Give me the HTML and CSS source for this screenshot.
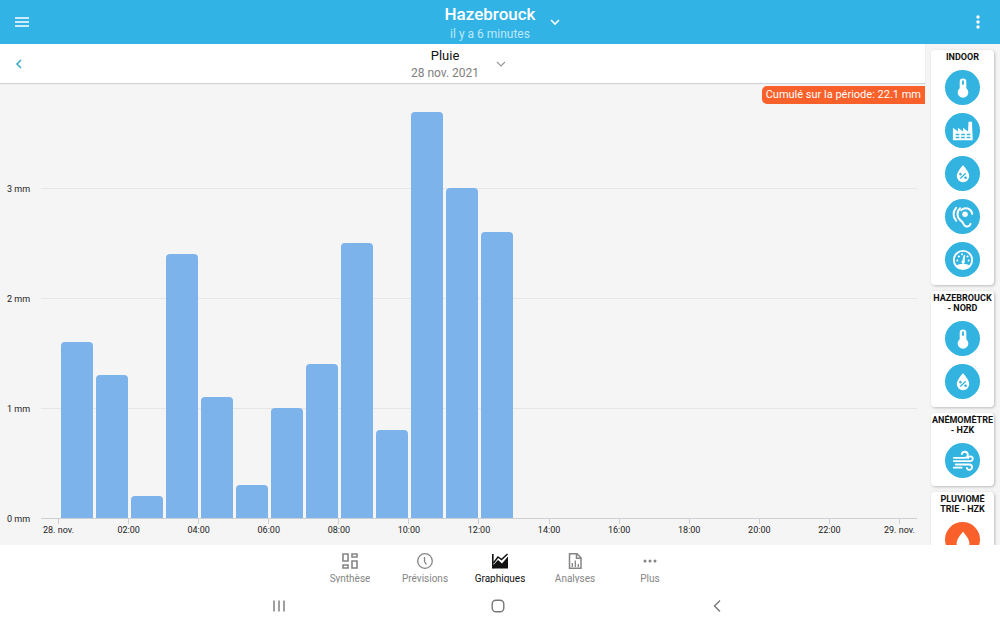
FILE: index.html
```html
<!DOCTYPE html>
<html lang="fr">
<head>
<meta charset="utf-8">
<meta name="viewport" content="width=device-width, initial-scale=1">
<title>Hazebrouck – Pluie</title>
<link rel="stylesheet" href="styles.css">
</head>
<body>
<svg class="defs" aria-hidden="true">
  <symbol id="thermo" viewBox="0 0 24 24">
    <path fill="currentColor" fill-rule="evenodd" d="M12 1.500a3.600 3.600 0 0 0-3.600 3.600v7.200a5.800 5.800 0 1 0 7.200 0V5.100A3.600 3.600 0 0 0 12 1.500zM12 3.600a1 1 0 0 1 1 1v3.800h-2V4.600a1 1 0 0 1 1-1z"/>
  </symbol>
  <symbol id="factory" viewBox="0 0 24 24">
    <path fill="currentColor" fill-rule="evenodd" d="M1 22V8.500l5.500 4V8.500l5.500 4V8.500l5.500 4L18 2h3.800l.8 20zM4 15v1.600h4V15zm6 0v1.600h4V15zm6 0v1.600h4V15zM4 18.200v1.600h4v-1.600zm6 0v1.600h4v-1.600zm6 0v1.600h4v-1.600z"/>
  </symbol>
  <symbol id="humidity" viewBox="0 0 24 24">
    <path fill="currentColor" d="M12 2.500s-6.800 7-6.800 11.700a6.800 6.800 0 0 0 13.600 0C18.800 9.500 12 2.500 12 2.500z"/>
    <g class="cut"><path d="M9 17l6-5.800" stroke-width="1.400"/><circle cx="9.200" cy="12.200" r="1"/><circle cx="14.800" cy="16" r="1"/></g>
  </symbol>
  <symbol id="ear" viewBox="0 0 24 24">
    <g fill="none" stroke="currentColor" stroke-width="2.200" stroke-linecap="round">
      <path d="M4.500 2C.8 6 .8 12 4.500 16"/>
      <path d="M8.800 2.500C5 6 5 12 9 15.500c3 2 3.300 3.300 4.300 5.300 1.300 2.400 6 2.300 6.900-1.300"/>
      <path d="M10 4.500c4-4 11-2 12 4"/>
    </g>
    <circle cx="14.200" cy="9" r="3" fill="currentColor"/>
  </symbol>
  <symbol id="gauge" viewBox="0 0 24 24">
    <circle cx="12" cy="12" r="10" fill="none" stroke="currentColor" stroke-width="2"/>
    <path fill="currentColor" d="M4.500 18.500c3-3.300 12-3.300 15 0-3.800 4.600-11.200 4.600-15 0zM12.800 6.500l1.600.4-.6 6.400a1.900 1.900 0 1 1-2.600-.6z"/>
    <g fill="currentColor"><circle cx="5.800" cy="12.500" r="1.100"/><circle cx="7.500" cy="8.200" r="1.200"/><circle cx="11" cy="5.800" r="1.100"/><circle cx="16.900" cy="8.200" r="1.200"/><circle cx="18.200" cy="12.500" r="1.100"/></g>
  </symbol>
  <symbol id="wind" viewBox="0 0 24 24">
    <g fill="none" stroke="currentColor" stroke-width="2" stroke-linecap="round">
      <path d="M2 8.500h12a3.300 3.300 0 1 0-3.300-4M2 12.200h18a2.600 2.600 0 1 0-2.500-3.300M4 15.800h15a2.900 2.900 0 1 1-2.800 3.800M2 19.300h8.500"/>
    </g>
  </symbol>
  <symbol id="drop" viewBox="0 0 24 24">
    <path fill="currentColor" d="M12 3s-7 7.500-7 12.500a7 7 0 0 0 14 0C19 10.500 12 3 12 3z"/>
  </symbol>
</svg>

<header class="topbar">
  <button class="icon-btn" aria-label="Menu">
    <svg width="16" height="12" viewBox="0 0 16 12"><path d="M1 2h14M1 6h14M1 10h14" stroke="currentColor" stroke-width="1.600"/></svg>
  </button>
  <button class="picker station">
    <span class="picker-text"><strong class="station-name">Hazebrouck</strong><span class="station-time">il y a 6 minutes</span></span>
    <svg class="chevron" width="12" height="12" viewBox="0 0 12 12"><path d="M2 4l4 4 4-4" fill="none" stroke="currentColor" stroke-width="1.600"/></svg>
  </button>
  <button class="icon-btn" aria-label="Options">
    <svg width="6" height="16" viewBox="0 0 6 16" fill="currentColor"><circle cx="3" cy="3" r="1.700"/><circle cx="3" cy="8" r="1.700"/><circle cx="3" cy="13" r="1.700"/></svg>
  </button>
</header>

<main class="content">
  <section class="panel">
    <div class="subbar">
      <button class="icon-btn" aria-label="Jour précédent">
        <svg class="back" width="12" height="12" viewBox="0 0 12 12"><path d="M8 2L4 6l4 4" fill="none" stroke="currentColor" stroke-width="1.600"/></svg>
      </button>
      <button class="picker">
        <span class="picker-text"><span class="measure">Pluie</span><span class="date">28 nov. 2021</span></span>
        <svg class="chevron muted" width="12" height="12" viewBox="0 0 12 12"><path d="M2 4l4 4 4-4" fill="none" stroke="currentColor" stroke-width="1.200"/></svg>
      </button>
      <span class="icon-btn"></span>
    </div>
    <div class="chart">
      <p class="total">Cumulé sur la période: 22.1 mm</p>
      <div class="y-axis">
        <span class="top">3 mm</span><span>2 mm</span><span>1 mm</span><span>0 mm</span>
      </div>
      <div class="plot">
        <div class="lines"><i class="top"></i><i></i><i></i><i></i></div>
        <div class="bars" id="bars"></div>
      </div>
      <div class="x-axis">
        <span>28. nov.</span><span>02:00</span><span>04:00</span><span>06:00</span><span>08:00</span><span>10:00</span><span>12:00</span><span>14:00</span><span>16:00</span><span>18:00</span><span>20:00</span><span>22:00</span><span>29. nov.</span>
      </div>
    </div>
  </section>

  <aside class="sensors">
    <section class="card">
      <h2>INDOOR</h2>
      <button class="sensor" aria-label="Température"><svg><use href="#thermo"/></svg></button>
      <button class="sensor" aria-label="CO2"><svg><use href="#factory"/></svg></button>
      <button class="sensor" aria-label="Humidité"><svg><use href="#humidity"/></svg></button>
      <button class="sensor" aria-label="Bruit"><svg><use href="#ear"/></svg></button>
      <button class="sensor" aria-label="Pression"><svg><use href="#gauge"/></svg></button>
    </section>
    <section class="card">
      <h2>HAZEBROUCK<br>- NORD</h2>
      <button class="sensor" aria-label="Température"><svg><use href="#thermo"/></svg></button>
      <button class="sensor" aria-label="Humidité"><svg><use href="#humidity"/></svg></button>
    </section>
    <section class="card">
      <h2>ANÉMOMÈTRE<br>- HZK</h2>
      <button class="sensor" aria-label="Vent"><svg><use href="#wind"/></svg></button>
    </section>
    <section class="card">
      <h2>PLUVIOMÉ<br>TRIE - HZK</h2>
      <button class="sensor active" aria-label="Pluie"><svg><use href="#drop"/></svg></button>
    </section>
  </aside>
</main>

<nav class="tabs">
  <a href="#synthese"><svg viewBox="0 0 18 18"><path d="M2 2h5v7H2zM11 2h5v3h-5zM11 9h5v7h-5zM2 13h5v3H2z" fill="none" stroke="currentColor" stroke-width="1.600"/></svg><span>Synthèse</span></a>
  <a href="#previsions"><svg viewBox="0 0 18 18"><circle cx="9" cy="9" r="7.300" fill="none" stroke="currentColor" stroke-width="1.300"/><path d="M8.500 5v4.500l2 3" fill="none" stroke="currentColor" stroke-width="1.300"/></svg><span>Prévisions</span></a>
  <a href="#graphiques" class="current" aria-current="page"><svg viewBox="0 0 18 18"><path d="M1 2h1.600v14.500H1z" fill="currentColor"/><path d="M2 16.500v-3l5-5.500 4 3.500 6-7v12z" fill="currentColor"/><path d="M2.500 11l4.500-6 3.500 2.500L16.500 2" fill="none" stroke="currentColor" stroke-width="1.500"/></svg><span>Graphiques</span></a>
  <a href="#analyses"><svg viewBox="0 0 18 18"><path d="M3.500 1.800h7.500l4 4v10.400H3.500zM10.500 2v4.300H15" fill="none" stroke="currentColor" stroke-width="1.500"/><path d="M6.300 15v-4M9.300 15V8.500M12.300 15v-3" stroke="currentColor" stroke-width="1.300"/></svg><span>Analyses</span></a>
  <a href="#plus"><svg viewBox="0 0 18 18" fill="currentColor"><circle cx="4" cy="9" r="1.500"/><circle cx="9" cy="9" r="1.500"/><circle cx="14" cy="9" r="1.500"/></svg><span>Plus</span></a>
</nav>

<div class="system">
  <button aria-label="Applications récentes"><svg viewBox="0 0 16 16"><path d="M3 2.500v11M8 2.500v11M13 2.500v11" stroke="currentColor" stroke-width="1.400"/></svg></button>
  <button aria-label="Accueil"><svg viewBox="0 0 16 16"><rect x="2.200" y="2.200" width="11.600" height="11.600" rx="3.800" fill="none" stroke="currentColor" stroke-width="1.400"/></svg></button>
  <button aria-label="Retour"><svg viewBox="0 0 16 16"><path d="M11 2.500L5.500 8l5.500 5.500" fill="none" stroke="currentColor" stroke-width="1.400"/></svg></button>
</div>
<script src="chart.js"></script>
</body>
</html>
```

FILE: styles.css
```css
* { box-sizing: border-box; }

body {
  margin: 0;
  height: 100vh;
  display: flex;
  flex-direction: column;
  font-family: Roboto, "Liberation Sans", sans-serif;
  background: #fff;
  color: #222;
}

button {
  border: 0;
  padding: 0;
  background: none;
  color: inherit;
  font: inherit;
  cursor: pointer;
}

svg { display: block; flex: none; }
.defs { position: absolute; width: 0; height: 0; }

/* Header bars */
.topbar, .subbar {
  display: flex;
  justify-content: space-between;
  align-items: stretch;
  flex: none;
}
.topbar { height: 44px; background: #32b3e5; color: #fff; }
.icon-btn {
  width: 44px;
  display: flex;
  align-items: center;
  justify-content: center;
}
.picker { display: flex; align-items: center; gap: 16px; }
.picker-text { display: flex; flex-direction: column; align-items: center; }
.station { padding-left: 6px; gap: 14px; }
.station .picker-text { padding-top: 1px; }
.station-name { font-size: 17px; line-height: 22px; font-weight: 500; }
.station-time { font-size: 12px; line-height: 18px; color: #bfe8f8; }
.subbar {
  height: 39px;
  padding-right: 7px;
  background: #fff;
  position: relative;
  box-shadow: 0 1px 1px #d4d4d4;
}
.subbar .icon-btn { width: 38px; }
.subbar .picker-text { padding-top: 2px; }
.back { color: #3fa9c4; }
.measure { font-size: 13px; line-height: 16px; color: #111; }
.date { font-size: 12px; line-height: 18px; color: #808080; }
.muted { color: #999; }

/* Main area */
.content { flex: 1; min-height: 0; display: flex; background: #f5f5f5; overflow: hidden; }
.panel { flex: 1; min-width: 0; display: flex; flex-direction: column; }

/* Chart: 25 hours wide, half an hour of margin at each end */
.chart {
  flex: 1;
  position: relative;
  display: grid;
  grid-template: 1fr 26px / 41px 1fr;
  padding-right: 8px;
  font-size: 9px;
  line-height: 12px;
}
.total {
  position: absolute;
  z-index: 1;
  top: 3px;
  right: 0;
  margin: 0;
  padding: 0 4px;
  border-radius: 5px 0 0 5px;
  background: #f9602a;
  color: #fff;
  font-size: 11px;
  line-height: 18px;
}
.y-axis, .lines { display: flex; flex-direction: column; }
.y-axis span {
  flex: 1 1 0;
  display: flex;
  align-items: flex-end;
  padding-left: 7px;
  margin: 0 0 -6px;
  padding-top: 6px;
}
.lines i { flex: 1 1 0; border-bottom: 1px solid #e6e6e6; }
.lines i:last-child { border-color: #ccd0d4; }
.y-axis .top, .lines .top { flex-grow: 0.96; }
.plot { display: grid; }
.lines, .bars { grid-area: 1 / 1; }
.bars {
  display: grid;
  grid-template-columns: 0.5fr repeat(24, 1fr) 0.5fr;
  align-items: end;
  padding-bottom: 1px;
}
.bar { background: #7cb3ea; border-radius: 4px 4px 0 0; margin: 0 1px 0 2px; }
.bar:first-child { grid-column-start: 2; }
.x-axis {
  grid-column: 2;
  display: flex;
  margin: 0 -2%;
}
.x-axis span {
  flex: 1 1 0;
  display: flex;
  flex-direction: column;
  align-items: center;
  white-space: nowrap;
}
.x-axis span::before { content: ""; width: 1px; height: 5px; background: #ccd0d4; }

/* Sensor column */
.sensors {
  flex: none;
  padding: 6px 6px 0;
  display: flex;
  flex-direction: column;
  gap: 6px;
}
.card {
  flex: none;
  width: 63px;
  padding: 2px 0 8px;
  display: flex;
  flex-direction: column;
  align-items: center;
  gap: 8px;
  background: #fff;
  border-radius: 4px;
  box-shadow: 1px 1px 3px #bbb;
}
.card h2 {
  margin: 0;
  font-size: 9px;
  line-height: 10px;
  font-weight: 700;
  color: #111;
  text-align: center;
  white-space: nowrap;
}
.sensor {
  width: 35px;
  height: 35px;
  border-radius: 50%;
  display: grid;
  place-items: center;
  background: #32b3e0;
  color: #fff;
}
.sensor svg { width: 22px; height: 22px; }
.cut { fill: #32b3e0; stroke: #32b3e0; }
.active { background: #f9602a; }

/* Bottom tabs */
.tabs { flex: none; height: 38px; padding-top: 7px; display: flex; justify-content: center; }
.tabs a {
  width: 75px;
  display: flex;
  flex-direction: column;
  align-items: center;
  gap: 1px;
  color: #858585;
  font-size: 10px;
  text-decoration: none;
}
.tabs span { height: 12px; line-height: 15px; overflow: hidden; }
.tabs svg { width: 18px; height: 18px; }
.tabs .current { color: #111; }

.system {
  flex: none;
  height: 42px;
  padding: 4px 4px 0 0;
  display: flex;
  justify-content: center;
  gap: 20.4%;
}
.system button { display: flex; align-items: center; color: #777; }
.system svg { width: 16px; height: 16px; }
```

FILE: chart.js
```js
const rain = [1.6, 1.3, 0.2, 2.4, 1.1, 0.3, 1.0, 1.4, 2.5, 0.8, 3.7, 3.0, 2.6];
const max = 3.96;
const bars = document.getElementById("bars");
for (const mm of rain) {
  const bar = document.createElement("div");
  bar.className = "bar";
  bar.style.height = (mm / max) * 100 + "%";
  bars.append(bar);
}
```
